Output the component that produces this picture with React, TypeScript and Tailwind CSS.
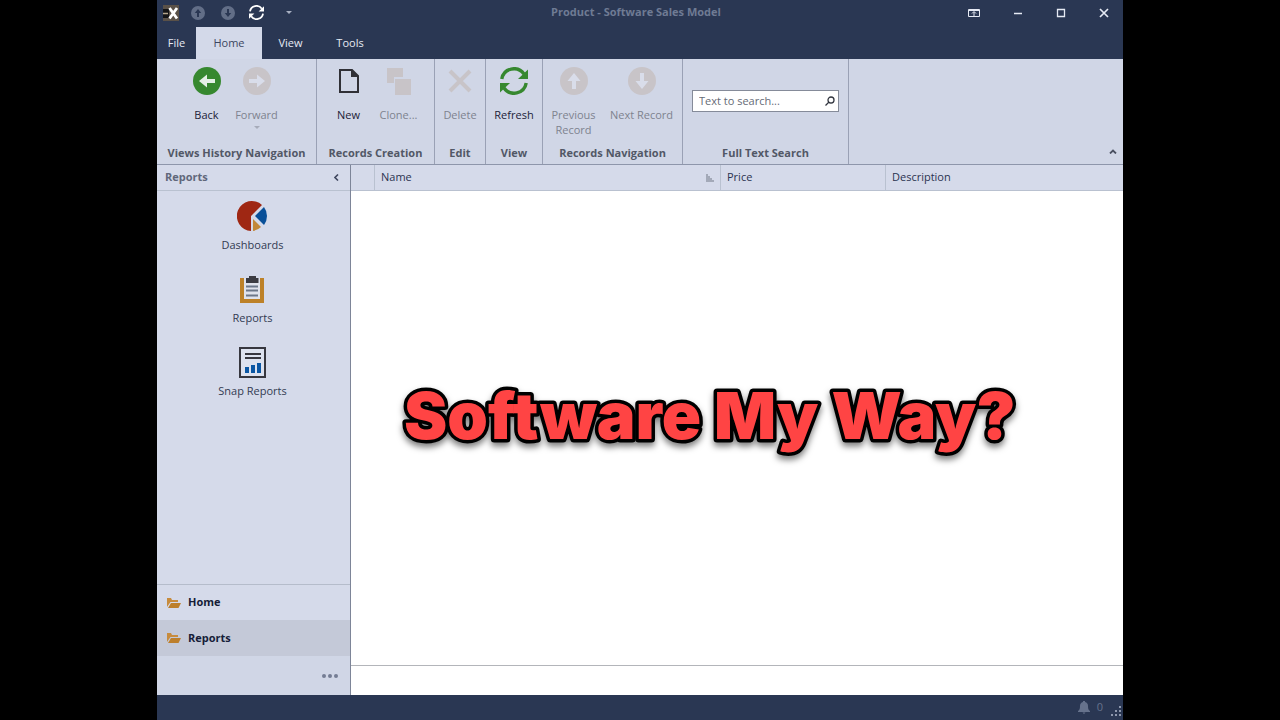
import type { ReactNode } from "react";

const ArrowCircle = ({ turn = "", color = "#c8c4c8", arrow = "#d9ddea", size = "size-7" }) => (
  <svg viewBox="0 0 28 28" className={`${size} ${turn}`}>
    <circle cx="14" cy="14" r="14" fill={color} />
    <path d="M6 14l8-6.500v4.500h8v4h-8v4.500z" fill={arrow} />
  </svg>
);

const RefreshIcon = ({ className = "" }) => (
  <svg viewBox="0 0 28 28" className={className} fill="none" stroke="currentColor" strokeWidth="3.4">
    <path d="M1.800 12A12.300 12.300 0 0 1 24 7" />
    <path d="M26.200 16A12.300 12.300 0 0 1 4 21" />
    <path d="M28 2.500V12H18z" fill="currentColor" stroke="none" />
    <path d="M0 25.500V16h10z" fill="currentColor" stroke="none" />
  </svg>
);

const NewIcon = () => (
  <svg viewBox="0 0 28 28" className="size-7">
    <path d="M5 3h12l6 6v16H5z" fill="none" stroke="#303036" strokeWidth="2" />
    <path d="M16 2l8 8h-8z" fill="#303036" />
  </svg>
);

const CloneIcon = () => (
  <svg viewBox="0 0 28 28" className="size-7">
    <path d="M2 1h16v9H9v6H2z" fill="#c8c4c8" />
    <path d="M10 12h16v16H10z" fill="#c8c4c8" />
  </svg>
);

const DeleteIcon = () => (
  <svg viewBox="0 0 28 28" className="size-7" stroke="#c8c4c8" strokeWidth="4">
    <path d="M4 4l20 20M24 4L4 24" />
  </svg>
);

const PieIcon = () => (
  <svg viewBox="0 0 30 30" className="size-[30px]">
    <path d="M14 30A15 15 0 1 1 25 4L14 15z" fill="#9f2713" />
    <path d="M27 6a15 15 0 0 1 0 18l-9-9z" fill="#094f98" />
    <path d="M16 30V18l8 8a15 15 0 0 1-8 4z" fill="#c2883a" />
  </svg>
);

const ClipboardIcon = () => (
  <svg viewBox="0 0 30 30" className="size-[30px]">
    <path d="M3 4h24v25H3z" fill="#bd8128" />
    <path d="M7 4h16v21H7z" fill="#dfe2ec" />
    <path d="M9 4h3V2h7v2h2.500v5H9z" fill="#3b3b42" />
    <path d="M9 12.500h12M9 16.500h12M9 21.500h12" stroke="#6c7789" strokeWidth="2" />
  </svg>
);

const SnapIcon = () => (
  <svg viewBox="0 0 30 32" className="h-8 w-[30px]">
    <path d="M3 1h25v29H3z" fill="#dde2ef" stroke="#37373f" strokeWidth="2" />
    <path d="M8 7h16M8 11h16" stroke="#37373f" strokeWidth="2" />
    <path d="M8 20h4v6H8zM14 18h4v8h-4zM20 16h4v10h-4z" fill="#0b57a4" />
  </svg>
);

const FolderIcon = () => (
  <svg viewBox="0 0 14 10" className="h-[10px] w-[14px]">
    <path d="M0 9V0h4l1 2h6v2H3.500z" fill="#c78b3d" />
    <path d="M4 5h10l-2.500 5H1z" fill="#bd7f2c" />
  </svg>
);

type ButtonProps = { icon: ReactNode; label: string; off?: boolean; width: string; arrow?: boolean };

const RibbonButton = ({ icon, label, off, width, arrow }: ButtonProps) => (
  <button
    disabled={off}
    className={`flex flex-col items-center gap-3 leading-[15px] ${width} ${off ? "text-[#7e838f]" : "text-[#1c2238]"}`}
  >
    {icon}
    <span className="flex flex-col items-center">
      {label}
      {arrow && (
        <svg viewBox="0 0 6 3" className="mt-1 h-[3px] w-[6px]">
          <path d="M0 0h6L3 3z" fill="#a6abb9" />
        </svg>
      )}
    </span>
  </button>
);

type GroupProps = { title: string; width: string; inset?: string; children: ReactNode };

const Group = ({ title, width, inset = "", children }: GroupProps) => (
  <section className={`flex shrink-0 flex-col items-center justify-between border-r border-[#9aa1b5] pt-2 pb-1 ${width}`}>
    <div className={`flex flex-1 justify-center ${inset}`}>{children}</div>
    <h2 className="leading-[15px] font-bold whitespace-nowrap text-[#525866]">{title}</h2>
  </section>
);

const TitleBar = () => (
  <header className="flex h-[27px] items-center pb-[2px] text-[#e6eaf4]">
    <div className="flex flex-1 items-center pl-[6px]">
      <svg viewBox="0 0 16 16" className="size-4">
        <path d="M0 0h16v16H0z" fill="#5a5148" />
        <path d="M0 4h6v9H0z" fill="#141416" />
        <path d="M0 8.500h5" stroke="#b6a78f" strokeWidth="1.500" />
        <path d="M6.500 3l7.500 10.500M14 3L6.500 13.500" stroke="#fff" strokeWidth="2.800" />
      </svg>
      <button aria-label="Previous record" className="ml-3">
        <ArrowCircle turn="rotate-90" color="#626e87" arrow="#2a3753" size="size-[14px]" />
      </button>
      <button aria-label="Next record" className="ml-4">
        <ArrowCircle turn="-rotate-90" color="#626e87" arrow="#2a3753" size="size-[14px]" />
      </button>
      <button aria-label="Refresh" className="ml-[14px]">
        <RefreshIcon className="size-[15px] text-white" />
      </button>
      <button aria-label="Customize toolbar" className="ml-[22px]">
        <svg viewBox="0 0 6 3" className="h-[3px] w-[6px]">
          <path d="M0 0h6L3 3z" fill="#a8b0c2" />
        </svg>
      </button>
    </div>
    <h1 className="font-bold text-[#6f7b94]">Product - Software Sales Model</h1>
    <div className="flex flex-1 items-center justify-end gap-[33px] pr-[14px]">
      <button aria-label="Ribbon display options">
        <svg viewBox="0 0 12 10" className="h-[10px] w-3" fill="none" stroke="currentColor">
          <path d="M.5 1.500h11v7H.5zM1 2.500h10M6 8V4M4 5.500L6 3.500l2 2" />
        </svg>
      </button>
      <button aria-label="Minimize">
        <svg viewBox="0 0 10 10" className="size-[10px]" fill="none" stroke="currentColor" strokeWidth="1.500">
          <path d="M1 5.500h8" />
        </svg>
      </button>
      <button aria-label="Maximize">
        <svg viewBox="0 0 10 10" className="size-[10px]" fill="none" stroke="currentColor" strokeWidth="1.300">
          <path d="M1.500 1.500h7v7h-7z" />
        </svg>
      </button>
      <button aria-label="Close">
        <svg viewBox="0 0 10 10" className="size-[10px]" fill="none" stroke="currentColor" strokeWidth="1.700">
          <path d="M1 1l8 8M9 1L1 9" />
        </svg>
      </button>
    </div>
  </header>
);

const Tabs = () => (
  <nav className="flex h-8 text-[#e6eaf4]">
    <button className="w-[39px]">File</button>
    <button className="w-[66px] bg-[#d3d9e9] text-[#3c4560]">Home</button>
    <button className="w-[57px]">View</button>
    <button className="w-[62px]">Tools</button>
  </nav>
);

const Ribbon = () => (
  <div className="flex h-[106px] border-b border-[#8e96ab] bg-[#d0d6e6]">
    <Group title="Views History Navigation" width="w-[160px]" inset="pr-[10px]">
      <RibbonButton icon={<ArrowCircle color="#36882f" arrow="#e4f0e6" />} label="Back" width="w-[50px]" />
      <RibbonButton icon={<ArrowCircle turn="rotate-180" />} label="Forward" width="w-[50px]" off arrow />
    </Group>
    <Group title="Records Creation" width="w-[118px]" inset="pr-1">
      <RibbonButton icon={<NewIcon />} label="New" width="w-[50px]" />
      <RibbonButton icon={<CloneIcon />} label="Clone..." width="w-[50px]" off />
    </Group>
    <Group title="Edit" width="w-[51px]">
      <RibbonButton icon={<DeleteIcon />} label="Delete" width="w-[50px]" off />
    </Group>
    <Group title="View" width="w-[57px]">
      <RibbonButton icon={<RefreshIcon className="size-7 text-[#36882f]" />} label="Refresh" width="w-[50px]" />
    </Group>
    <Group title="Records Navigation" width="w-[140px]" inset="pr-[2px]">
      <RibbonButton icon={<ArrowCircle turn="rotate-90" />} label="Previous Record" width="w-[60px]" off />
      <RibbonButton icon={<ArrowCircle turn="-rotate-90" />} label="Next Record" width="w-[76px]" off />
    </Group>
    <Group title="Full Text Search" width="w-[166px]">
      <label className="mb-[10px] flex h-[22px] w-[147px] items-center self-center border border-[#858b99] bg-white pr-[3px] pl-[6px]">
        <input
          type="text"
          aria-label="Full text search"
          placeholder="Text to search..."
          className="w-full min-w-0 outline-none placeholder:text-[#666b76]"
        />
        <svg viewBox="0 0 10 10" className="size-[10px] shrink-0" fill="none" stroke="#30343e" strokeWidth="1.300">
          <circle cx="6" cy="4" r="3" />
          <path d="M4 6L.5 9.500" />
        </svg>
      </label>
    </Group>
    <button aria-label="Collapse ribbon" className="mt-auto mr-[6px] mb-[10px] ml-auto">
      <svg viewBox="0 0 8 5" className="h-[5px] w-2" fill="none" stroke="#4a5061" strokeWidth="1.800">
        <path d="M1 4.500l3-3 3 3" />
      </svg>
    </button>
  </div>
);

const items = [
  { label: "Dashboards", icon: <PieIcon /> },
  { label: "Reports", icon: <ClipboardIcon /> },
  { label: "Snap Reports", icon: <SnapIcon /> },
];

const Sidebar = () => (
  <aside className="flex w-[194px] shrink-0 flex-col border-r border-[#7d8598] bg-[#d5daea]">
    <div className="flex h-[26px] items-center justify-between border-b border-[#b9c1d0] pr-[11px] pl-2">
      <h2 className="font-bold text-[#60677a]">Reports</h2>
      <button aria-label="Collapse panel">
        <svg viewBox="0 0 5 7" className="h-[7px] w-[5px]" fill="none" stroke="#414860" strokeWidth="1.600">
          <path d="M4 .5l-3 3 3 3" />
        </svg>
      </button>
    </div>
    <div className="flex flex-1 flex-col items-center gap-[21px] pt-[10px] pr-[2px]">
      {items.map((item) => (
        <button key={item.label} className="flex h-[52px] flex-col items-center justify-between leading-4 text-[#333a52]">
          {item.icon}
          {item.label}
        </button>
      ))}
    </div>
    <div className="border-t border-[#b5bccb] text-[#161d38]">
      <button className="flex h-[35px] w-full items-center gap-[7px] pl-[10px] font-bold">
        <FolderIcon />
        Home
      </button>
      <button className="flex h-9 w-full items-center gap-[7px] bg-[#c4c9d8] pl-[10px] font-bold">
        <FolderIcon />
        Reports
      </button>
    </div>
    <div className="flex h-[39px] items-center justify-end bg-[#d0d6e6] pr-3">
      <button aria-label="More">
        <svg viewBox="0 0 16 4" className="h-1 w-4" fill="#747d94">
          <circle cx="2" cy="2" r="2" />
          <circle cx="8" cy="2" r="2" />
          <circle cx="14" cy="2" r="2" />
        </svg>
      </button>
    </div>
  </aside>
);

const Caption = () => (
  <svg
    viewBox="0 0 640 90"
    className="absolute top-[205px] left-[50px] h-[90px] w-[640px] overflow-visible [filter:drop-shadow(0_4px_3px_rgb(0_0_0/0.5))]"
  >
    <text
      x="3"
      y="69"
      fill="#ff4444"
      stroke="#000"
      strokeWidth="7"
      strokeLinejoin="round"
      className="font-['Inter',sans-serif] text-[65px] font-black [paint-order:stroke_fill]"
    >
      Software My Way?
    </text>
  </svg>
);

const Grid = () => (
  <main className="relative flex flex-1 flex-col bg-white">
    <table className="w-full table-fixed border-separate border-spacing-0 text-left text-[#2b3350]">
      <thead>
        <tr className="h-[26px] bg-[#d5daea] *:border-b *:border-[#b9c1d0] *:p-0 *:pl-[6px] *:font-normal">
          <th className="w-6 border-r"></th>
          <th className="w-[346px] border-r">
            <div className="flex items-center justify-between pr-[6px]">
              Name
              <svg viewBox="0 0 8 8" className="size-2" fill="#a3a9b8">
                <path d="M0 0h2v2h2v2h2v2h2v2H0z" />
              </svg>
            </div>
          </th>
          <th className="w-[165px] border-r">Price</th>
          <th>Description</th>
        </tr>
      </thead>
    </table>
    <Caption />
    <div className="mt-auto h-[30px] border-t border-[#b3b5ba]"></div>
  </main>
);

const StatusBar = () => (
  <footer className="flex h-[25px] items-center justify-end bg-[#2a3753] pr-[2px] text-[#66728c]">
    <svg viewBox="0 0 12 13" className="h-[13px] w-3" fill="currentColor">
      <path d="M5 0h2v1c2 .5 3 2 3 4 0 3 .5 4 2 5v1H0v-1c1.500-1 2-2 2-5 0-2 1-3.500 3-4zM4.500 11.500h3L6 13z" />
    </svg>
    <span className="ml-[7px]">0</span>
    <svg viewBox="0 0 10 10" className="mb-1 ml-2 size-[10px] self-end" fill="#8e98ae">
      <path d="M8 0h2v2H8zM4 4h2v2H4zM8 4h2v2H8zM0 8h2v2H0zM4 8h2v2H4zM8 8h2v2H8z" />
    </svg>
  </footer>
);

const App = () => {
  return (
    <div className="flex min-h-screen bg-black px-[157px] font-['Open_Sans','Noto_Sans',sans-serif] text-[11px]">
      <div className="flex min-w-0 flex-1 flex-col bg-[#2a3753]">
        <TitleBar />
        <Tabs />
        <Ribbon />
        <div className="flex flex-1">
          <Sidebar />
          <Grid />
        </div>
        <StatusBar />
      </div>
    </div>
  );
};

export default App;
